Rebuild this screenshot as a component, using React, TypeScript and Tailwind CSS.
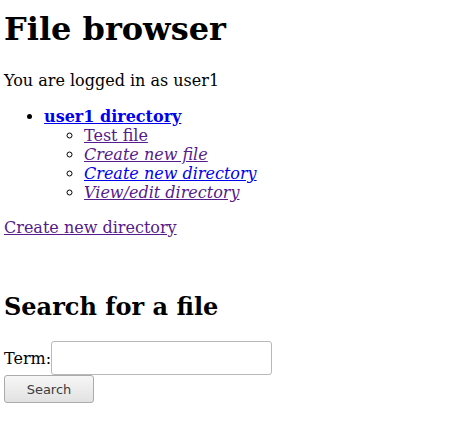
export default function App() {
  const visited = "text-[#551a8b] underline";
  const fresh = "text-[#0000ee] underline";

  return (
    <div className="min-h-screen bg-white px-[4px] font-['DejaVu_Serif',serif] text-[16px] leading-[19px] text-black">
      <h1 className="mt-[11px] mb-[23px] text-[32px] leading-[37px] font-bold">File browser</h1>

      <p>You are logged in as user1</p>

      <ul className="mt-[17px] list-disc pl-10">
        <li>
          <a href="#" className={`${fresh} font-bold`}>
            user1 directory
          </a>
          <ul className="list-[circle] pl-10">
            <li>
              <a href="#" className={visited}>
                Test file
              </a>
            </li>
            <li>
              <a href="#" className={`${visited} italic`}>
                Create new file
              </a>
            </li>
            <li>
              <a href="#" className={`${fresh} italic`}>
                Create new directory
              </a>
            </li>
            <li>
              <a href="#" className={`${visited} italic`}>
                View/edit directory
              </a>
            </li>
          </ul>
        </li>
      </ul>

      <p className="mt-[16px]">
        <a href="#" className={visited}>
          Create new directory
        </a>
      </p>

      <h2 className="mt-[56px] text-[24px] leading-[28px] font-bold">Search for a file</h2>

      {/* search form */}
      <form className="mt-[20px]" onSubmit={(e) => e.preventDefault()}>
        <div className="flex items-end">
          <label htmlFor="term" className="mb-[7px]">
            Term:
          </label>
          <input
            id="term"
            type="text"
            className="h-[34px] w-[221px] rounded-[3px] border border-[#b8b8b8] bg-white px-1 outline-none"
          />
        </div>
        <button
          type="submit"
          className="h-[28px] w-[90px] rounded-[3px] border border-[#ababab] bg-[linear-gradient(180deg,#f6f6f6,#e2e2e2)] font-['DejaVu_Sans',sans-serif] text-[13px] text-[#3c3c3c]"
        >
          Search
        </button>
      </form>
    </div>
  );
}
